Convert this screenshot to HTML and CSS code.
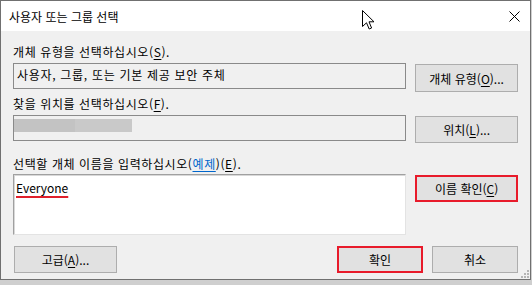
FILE: index.html
```html
<!DOCTYPE html>
<html lang="ko">
<head>
  <meta charset="UTF-8">
  <meta name="viewport" content="width=device-width, initial-scale=1.0">
  <title>사용자 또는 그룹 선택</title>
  <link rel="stylesheet" href="styles.css">
</head>
<body>
  <div class="window">
    <div class="titlebar">
      <span class="title">사용자 또는 그룹 선택</span>
      <svg class="close" width="11" height="11" viewBox="0 0 11 11"><path d="M0.5 0.5 L10.5 10.5 M10.5 0.5 L0.5 10.5" stroke="#000" stroke-width="1" fill="none"/></svg>
    </div>

    <div class="content">
      <div class="label first">개체 유형을 선택하십시오(<u>S</u>).</div>
      <div class="row">
        <div class="field">사용자, 그룹, 또는 기본 제공 보안 주체</div>
        <button class="btn side tall">개체 유형(<u>O</u>)...</button>
      </div>

      <div class="label">찾을 위치를 선택하십시오(<u>F</u>).</div>
      <div class="row">
        <div class="field"><span class="blur left"></span><span class="blur right"></span></div>
        <button class="btn side">위치(<u>L</u>)...</button>
      </div>

      <div class="label third">선택할 개체 이름을 입력하십시오(<a class="link">예제</a>)(<u>E</u>).</div>
      <div class="row names-row">
        <div class="names"><span class="typed">Everyone</span></div>
        <button class="btn side focus">이름 확인(<u>C</u>)</button>
      </div>

      <div class="footer">
        <button class="btn wide">고급(<u>A</u>)...</button>
        <div class="actions">
          <button class="btn small focus">확인</button>
          <button class="btn small">취소</button>
        </div>
      </div>
    </div>

    <svg class="grip" width="8" height="8" viewBox="0 0 8 8">
      <rect x="6" y="0" width="2" height="2" fill="#b4b4b4"/>
      <rect x="3" y="3" width="2" height="2" fill="#b4b4b4"/>
      <rect x="6" y="3" width="2" height="2" fill="#b4b4b4"/>
      <rect x="0" y="6" width="2" height="2" fill="#b4b4b4"/>
      <rect x="3" y="6" width="2" height="2" fill="#b4b4b4"/>
      <rect x="6" y="6" width="2" height="2" fill="#b4b4b4"/>
    </svg>
  </div>

  <!-- mouse pointer left over the title bar -->
  <svg class="cursor" width="13" height="20" viewBox="0 0 13 20">
    <path d="M0.5 0.5 V16.5 L4.5 12.8 L7.2 19 L9.6 18 L7 11.8 H12 Z" fill="#fff" stroke="#000" stroke-width="1" stroke-linejoin="miter"/>
  </svg>
</body>
</html>
```

FILE: styles.css
```css
body { margin: 0; width: 532px; height: 285px; background: #cfcfcf; font-family: "Noto Sans CJK KR", "Noto Sans", sans-serif; font-size: 12px; color: #000; position: relative; overflow: hidden; }

.window { width: 531px; height: 280px; box-sizing: border-box; border: 1px solid #707070; background: #f0f0f0; position: relative; }

.titlebar { height: 30px; background: #fff; display: flex; align-items: center; justify-content: space-between; padding: 0 9px 0 8px; }
.title { font-size: 12px; line-height: 17px; padding-top: 1px; }
.close { display: block; margin-right: 1px; }

.content { padding: 0 12px; }
.label { line-height: 17px; margin-top: 3px; white-space: nowrap; letter-spacing: 0.6px; }
.label.first { margin-top: 12px; }
.label.third { margin-top: 12px; }
.label u, .btn u { text-decoration-thickness: 1px; text-underline-offset: 2px; }
.link { color: #0066cc; text-decoration: underline; text-underline-offset: 2px; }

.row { display: flex; align-items: flex-start; gap: 9px; margin-top: 3px; }
.names-row { margin-top: 2px; }

.field { width: 394px; height: 26px; box-sizing: border-box; border: 1px solid #8a8a8a; background: #f0f0f0; padding: 2px 0 0 3px; line-height: 17px; display: flex; align-items: flex-start; letter-spacing: 0.7px; white-space: nowrap; }
.blur { display: block; height: 13px; margin-top: 1px; }
.blur.left { width: 61px; background: #c3c3c3; margin-left: -3px; }
.blur.right { width: 57px; background: #c9c9c9; }

.names { width: 394px; height: 61px; box-sizing: border-box; background: #fff; border: 1px solid; border-color: #a0a0a0 #e3e3e3 #e3e3e3 #a0a0a0; box-shadow: inset 1px 1px 0 #d8d8d8; padding: 4px 0 0 2px; line-height: 17px; }
.typed { text-decoration: underline; text-decoration-color: #e0202c; text-decoration-thickness: 2px; text-underline-offset: 3px; }

.btn { font-family: inherit; font-size: 12px; color: #000; background: #e1e1e1; border: 1px solid #adadad; height: 27px; padding: 0; margin: 0; box-sizing: border-box; line-height: 17px; }
.side { width: 103px; margin-top: 1px; }
.side.tall { height: 28px; }
.focus { border: 2px solid #e81b2b; }

.footer { display: flex; justify-content: space-between; margin-top: 11px; padding-left: 1px; }
.wide { width: 103px; }
.actions { display: flex; gap: 9px; }
.small { width: 86px; }

.grip { position: absolute; right: 1px; bottom: 1px; }
.cursor { position: absolute; left: 362px; top: 10px; }
```
